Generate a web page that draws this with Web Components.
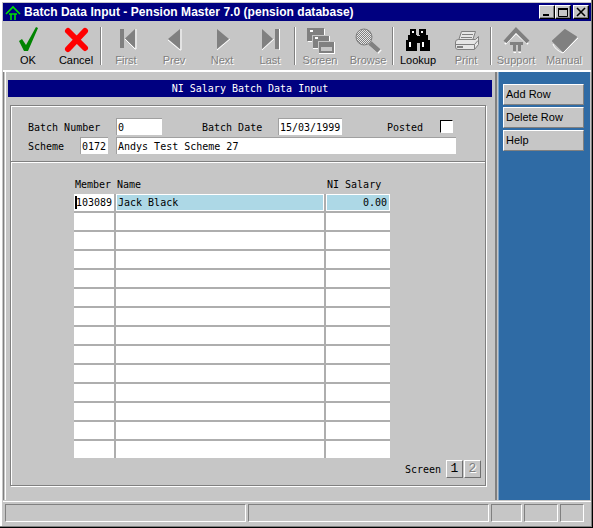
<!DOCTYPE html>
<html>
<head>
<meta charset="utf-8">
<title>Batch Data Input</title>
<style>
  html, body { margin: 0; padding: 0; background: #c6c6c6; }
</style>
</head>
<body>
<pm-window>
  <pm-titlebar slot="title">Batch Data Input - Pension Master 7.0 (pension database)</pm-titlebar>

  <pm-toolbar slot="toolbar">
    <pm-tool>
      <svg slot="icon" width="30" height="28"><polygon points="6,14 9,12 13,18 23,0 25,1 15,24 11,24" fill="#008400"/></svg>
      OK
    </pm-tool>
    <pm-tool>
      <svg slot="icon" width="30" height="28"><path d="M7 4 L24 21 M24 4 L7 22" stroke="#f00" stroke-width="6" stroke-linecap="round" fill="none"/></svg>
      Cancel
    </pm-tool>
    <pm-sep></pm-sep>
    <pm-tool disabled>
      <svg slot="icon" width="30" height="28"><rect x="9" y="2" width="4" height="19" fill="#808080"/><polygon points="14,11.5 24,2 24,21" fill="#808080"/><path d="M14 12 L24 22 H25 V2" stroke="#fff" fill="none"/></svg>
      First
    </pm-tool>
    <pm-tool disabled>
      <svg slot="icon" width="30" height="28"><polygon points="9,12 21,2 21,22" fill="#808080"/><path d="M9 13 L21 23 H22 V2" stroke="#fff" fill="none"/></svg>
      Prev
    </pm-tool>
    <pm-tool disabled>
      <svg slot="icon" width="30" height="28"><polygon points="10,2 22,12 10,22" fill="#808080"/><path d="M10 23 L23 12" stroke="#fff" fill="none"/></svg>
      Next
    </pm-tool>
    <pm-tool disabled>
      <svg slot="icon" width="30" height="28"><polygon points="7,2 18,12 7,22" fill="#808080"/><rect x="20" y="2" width="4" height="20" fill="#808080"/><path d="M7 23 L19 12 M24.5 2 V23" stroke="#fff" fill="none"/></svg>
      Last
    </pm-tool>
    <pm-sep></pm-sep>
    <pm-tool disabled>
      <svg slot="icon" width="30" height="28" shape-rendering="crispEdges">
        <rect x="2" y="1" width="17" height="13" fill="#808080"/><path d="M3 14.5 H19.5 V2" stroke="#fff" fill="none"/><rect x="5" y="3" width="3" height="2" fill="#fff"/>
        <rect x="7" y="8" width="17" height="13" fill="#808080" stroke="#c6c6c6"/><path d="M8 21.5 H24.5 V9" stroke="#fff" fill="none"/><rect x="10" y="10" width="3" height="2" fill="#fff"/>
        <rect x="13" y="14" width="16" height="12" fill="#808080" stroke="#c6c6c6"/><path d="M14 26.5 H29.5 V15" stroke="#fff" fill="none"/><rect x="16" y="20" width="11" height="4" fill="#c6c6c6"/>
      </svg>
      Screen
    </pm-tool>
    <pm-tool disabled>
      <svg slot="icon" width="30" height="28">
        <defs><pattern id="chk" width="2" height="2" patternUnits="userSpaceOnUse"><rect width="2" height="2" fill="#808080"/><rect width="1" height="1" fill="#e8e8e8"/><rect x="1" y="1" width="1" height="1" fill="#e8e8e8"/></pattern></defs>
        <path d="M18 17 L27 25" stroke="#fff" stroke-width="5"/>
        <path d="M17 16 L26 24" stroke="#808080" stroke-width="5"/>
        <circle cx="11" cy="10" r="8" fill="url(#chk)" stroke="#808080"/>
      </svg>
      Browse
    </pm-tool>
    <pm-sep></pm-sep>
    <pm-tool>
      <svg slot="icon" width="30" height="28" shape-rendering="crispEdges">
        <path d="M7 2 H13 V8 H14 V9 H17 V8 H16 V2 H23 V8 H25 V13 H27 V24 H17 V16 H14 V24 H3 V13 H5 V8 H7 Z" fill="#000"/>
        <path d="M6 15 H8 V20 H6 Z M19 15 H21 V20 H19 Z M9 4 H11 V6 H9 Z M18 4 H20 V6 H18 Z" fill="#fff"/>
      </svg>
      Lookup
    </pm-tool>
    <pm-tool disabled>
      <svg slot="icon" width="30" height="28">
        <polygon points="10.5,4.5 24.5,4.5 21.5,13.5 7.5,13.5" fill="#e6e6e6" stroke="#808080"/>
        <path d="M11 7.5 H22 M10 10.5 H21" stroke="#808080"/>
        <path d="M7.5 12.5 H24.5 L27.5 9.5 V17.5 L23.5 22.5 H7 Q4.5 22.5 4.5 20 V15 Q4.5 12.5 7.5 12.5 Z" fill="#e6e6e6" stroke="#808080"/>
        <path d="M5 17.5 H23.5 V22 M23.5 17.5 L27 13.5" stroke="#808080" fill="none"/>
        <rect x="6" y="19" width="6" height="2" fill="#808080"/>
      </svg>
      Print
    </pm-tool>
    <pm-sep></pm-sep>
    <pm-tool disabled>
      <svg slot="icon" width="30" height="28">
        <path d="M4 15 L15 4 L27 15" stroke="#fff" stroke-width="2" fill="none" transform="translate(0 2)"/>
        <path d="M4 15 L15 3 L27 15" stroke="#808080" stroke-width="4" fill="none"/>
        <path d="M9 15 H22 V18 H20 V24 H17 V18 H15 V24 H12 V18 H9 Z" fill="#808080"/>
        <path d="M12.5 25.5 H15 M17.5 25.5 H20" stroke="#fff" fill="none"/>
      </svg>
      Support
    </pm-tool>
    <pm-tool disabled>
      <svg slot="icon" width="30" height="28">
        <polygon points="4,14 16,3 27,10 14,24" fill="#808080" stroke="#808080" stroke-width="2" stroke-linejoin="round"/>
        <path d="M4 17 Q6 23 14 26 L29 11" stroke="#fff" fill="none"/>
      </svg>
      Manual
    </pm-tool>
  </pm-toolbar>

  <pm-heading slot="main">NI Salary Batch Data Input</pm-heading>
  <pm-group slot="main">
    <pm-form-row slot="form">
      <pm-label style="width:88px">Batch Number</pm-label>
      <pm-field style="width:46px">0</pm-field>
      <pm-label style="width:76px;margin-left:40px">Batch Date</pm-label>
      <pm-field style="width:64px">15/03/1999</pm-field>
      <pm-label style="width:53px;margin-left:45px">Posted</pm-label>
      <pm-check></pm-check>
    </pm-form-row>
    <pm-form-row slot="form">
      <pm-label style="width:52px">Scheme</pm-label>
      <pm-field style="width:28px">0172</pm-field>
      <pm-field style="width:340px;margin-left:8px">Andys Test Scheme 27</pm-field>
    </pm-form-row>

    <pm-table id="rows"></pm-table>

    <pm-pager slot="footer">
      <pm-page-btn>1</pm-page-btn>
      <pm-page-btn disabled>2</pm-page-btn>
    </pm-pager>
  </pm-group>

  <pm-side-btn slot="side">Add Row</pm-side-btn>
  <pm-side-btn slot="side">Delete Row</pm-side-btn>
  <pm-side-btn slot="side">Help</pm-side-btn>

  <pm-status slot="status" style="width:241px"></pm-status>
  <pm-status slot="status" style="width:241px"></pm-status>
  <pm-status slot="status" style="width:31px"></pm-status>
  <pm-status slot="status" style="width:34px"></pm-status>
  <pm-status slot="status" style="width:24px"></pm-status>
</pm-window>

<script>
const MONO = '"DejaVu Sans Mono", "Liberation Mono", monospace';
const SANS = '"Liberation Sans", sans-serif';

class PmWindow extends HTMLElement {
    constructor() {
        super();
        this.attachShadow({ mode: 'open' });
        this.shadowRoot.innerHTML = `
            <style>
                :host {
                    display: flex;
                    flex-direction: column;
                    box-sizing: border-box;
                    width: 593px;
                    height: 528px;
                    padding: 3px 2px 2px 3px;
                    background: #c6c6c6;
                    box-shadow: inset -1px -1px 0 #000, inset -2px -2px 0 #808080, inset 2px 2px 0 #fff, inset 1px 1px 0 #c6c6c6;
                    overflow: hidden;
                }
                .client {
                    display: flex;
                    height: 428px;
                    border-top: 2px solid #fff;
                    box-shadow: inset 1px 0 0 #808080;
                }
                .main {
                    box-sizing: border-box;
                    width: 492px;
                    margin-left: 2px;
                    padding: 8px 0 0 2px;
                    border-right: 2px solid #808080;
                    border-left: 1px solid #fff;
                }
                .side {
                    display: flex;
                    flex-direction: column;
                    gap: 2px;
                    box-sizing: border-box;
                    width: 92px;
                    margin-left: 1px;
                    padding: 12px 0 0 4px;
                    background: #2f6ba5;
                    border-left: 1px solid #7fa3c6;
                }
                .status {
                    display: flex;
                    gap: 2px;
                    margin-top: 1px;
                    padding: 2px 0 0 2px;
                    border-top: 1px solid #fff;
                }
            </style>
            <slot name="title"></slot>
            <slot name="toolbar"></slot>
            <div class="client">
                <div class="main"><slot name="main"></slot></div>
                <div class="side"><slot name="side"></slot></div>
            </div>
            <div class="status"><slot name="status"></slot></div>
        `;
    }
}

class PmTitlebar extends HTMLElement {
    constructor() {
        super();
        this.attachShadow({ mode: 'open' });
        this.shadowRoot.innerHTML = `
            <style>
                :host {
                    display: flex;
                    align-items: center;
                    height: 18px;
                    background: #000080;
                    color: #fff;
                    font: bold 12px "Liberation Sans", sans-serif;
                    letter-spacing: 0.04px;
                    white-space: nowrap;
                }
                .logo { margin: 0 3px 0 2px; flex: none; }
                .text { flex: 1; }
                .btns { display: flex; margin-right: 2px; }
                .btn {
                    box-sizing: border-box;
                    width: 16px;
                    height: 14px;
                    background: #c6c6c6;
                    border: 1px solid;
                    border-color: #fff #000 #000 #fff;
                    box-shadow: inset -1px -1px 0 #808080;
                }
                .btn svg { display: block; }
                .btn.close { margin-left: 2px; }
            </style>
            <svg class="logo" width="16" height="15" fill="none" stroke="#00e000" stroke-width="1.6">
                <path d="M1 9 L8 2 L15 9"/><path d="M4 9 H12 M6 9 V15 M10 9 V15"/>
            </svg>
            <span class="text"><slot></slot></span>
            <div class="btns">
                <div class="btn"><svg width="14" height="12"><rect x="3" y="8" width="6" height="2" fill="#000"/></svg></div>
                <div class="btn"><svg width="14" height="12"><path d="M2.5 2.5 H11.5 V10.5 H2.5 Z" fill="none" stroke="#000"/><rect x="2" y="2" width="10" height="2"/></svg></div>
                <div class="btn close"><svg width="14" height="12"><path d="M3 2 L11 10 M11 2 L3 10" stroke="#000" stroke-width="1.6"/></svg></div>
            </div>
        `;
    }
}

class PmToolbar extends HTMLElement {
    constructor() {
        super();
        this.attachShadow({ mode: 'open' });
        this.shadowRoot.innerHTML = `
            <style>
                :host {
                    display: flex;
                    box-sizing: border-box;
                    height: 48px;
                    margin-top: 1px;
                    padding-left: 1px;
                }
            </style>
            <slot></slot>
        `;
    }
}

class PmTool extends HTMLElement {
    constructor() {
        super();
        this.attachShadow({ mode: 'open' });
        this.shadowRoot.innerHTML = `
            <style>
                :host {
                    display: flex;
                    flex-direction: column;
                    align-items: center;
                    box-sizing: border-box;
                    width: 48px;
                    padding-top: 5px;
                    font: 11px ${SANS};
                    color: #000;
                    white-space: nowrap;
                }
                :host([disabled]) {
                    color: #808080;
                    text-shadow: 1px 1px 0 #fff;
                }
                ::slotted(svg) { display: block; overflow: visible; }
                .label { height: 14px; line-height: 14px; margin-top: -2px; }
            </style>
            <slot name="icon"></slot>
            <div class="label"><slot></slot></div>
        `;
    }
}

class PmSep extends HTMLElement {
    constructor() {
        super();
        this.attachShadow({ mode: 'open' });
        this.shadowRoot.innerHTML = `
            <style>
                :host {
                    display: block;
                    box-sizing: border-box;
                    width: 2px;
                    height: 38px;
                    margin-top: 5px;
                    border-left: 1px solid #808080;
                    border-right: 1px solid #fff;
                }
            </style>
        `;
    }
}

class PmHeading extends HTMLElement {
    constructor() {
        super();
        this.attachShadow({ mode: 'open' });
        this.shadowRoot.innerHTML = `
            <style>
                :host {
                    display: block;
                    width: 484px;
                    height: 17px;
                    background: #000080;
                    color: #fff;
                    font: 10px/17px ${MONO};
                    text-align: center;
                }
            </style>
            <slot></slot>
        `;
    }
}

class PmGroup extends HTMLElement {
    constructor() {
        super();
        this.attachShadow({ mode: 'open' });
        this.shadowRoot.innerHTML = `
            <style>
                :host {
                    display: block;
                    box-sizing: border-box;
                    width: 476px;
                    height: 381px;
                    margin: 8px 0 0 2px;
                    border: 1px solid #808080;
                    box-shadow: 1px 1px 0 #fff, inset 1px 1px 0 #fff;
                    font: 10px ${MONO};
                    color: #000;
                }
                .form {
                    display: flex;
                    flex-direction: column;
                    gap: 2px;
                    height: 56px;
                    box-sizing: border-box;
                    padding: 12px 0 0 17px;
                    border-bottom: 1px solid #808080;
                    box-shadow: 0 1px 0 #fff;
                }
                .body {
                    padding: 16px 0 0 63px;
                }
                .foot { display: flex; justify-content: flex-end; padding: 2px 4px 0 0; }
            </style>
            <div class="form"><slot name="form"></slot></div>
            <div class="body"><slot></slot></div>
            <div class="foot"><slot name="footer"></slot></div>
        `;
    }
}

class PmFormRow extends HTMLElement {
    constructor() {
        super();
        this.attachShadow({ mode: 'open' });
        this.shadowRoot.innerHTML = `
            <style>
                :host { display: flex; align-items: center; height: 17px; }
            </style>
            <slot></slot>
        `;
    }
}

class PmLabel extends HTMLElement {
    constructor() {
        super();
        this.attachShadow({ mode: 'open' });
        this.shadowRoot.innerHTML = `
            <style>
                :host { display: block; flex: none; padding-top: 2px; white-space: nowrap; }
            </style>
            <slot></slot>
        `;
    }
}

class PmField extends HTMLElement {
    constructor() {
        super();
        this.attachShadow({ mode: 'open' });
        this.shadowRoot.innerHTML = `
            <style>
                :host {
                    display: block;
                    flex: none;
                    box-sizing: border-box;
                    height: 17px;
                    padding: 1px 0 0 1px;
                    line-height: 15px;
                    background: #fff;
                    border-top: 1px solid #a0a0a0;
                    border-left: 1px solid #a0a0a0;
                    white-space: nowrap;
                }
            </style>
            <slot></slot>
        `;
    }
}

class PmCheck extends HTMLElement {
    constructor() {
        super();
        this.attachShadow({ mode: 'open' });
        this.shadowRoot.innerHTML = `
            <style>
                :host {
                    display: block;
                    flex: none;
                    box-sizing: border-box;
                    width: 13px;
                    height: 13px;
                    background: #fff;
                    border: 1px solid #000;
                    border-right-color: #fff;
                    border-bottom-color: #fff;
                }
            </style>
        `;
    }
}

// grid of rows: the grey between the cells is the background of the grid
class PmTable extends HTMLElement {
    constructor() {
        super();
        this.attachShadow({ mode: 'open' });
        this.shadowRoot.innerHTML = `
            <style>
                :host { display: block; width: 316px; }
                .head {
                    display: grid;
                    grid-template-columns: 42px 210px 64px;
                    height: 16px;
                    line-height: 13px;
                }
                .head span { padding-left: 1px; }
                .grid {
                    display: grid;
                    grid-template-columns: 40px 208px 64px;
                    grid-auto-rows: 17px;
                    gap: 2px;
                    background: #aeaeae;
                }
            </style>
            <div class="head"><span>Member</span><span>Name</span><span>NI Salary</span></div>
            <div class="grid"><slot></slot></div>
        `;
    }

    connectedCallback() {
        this.appendChild(this._cell('103089', 'caret'));
        this.appendChild(this._cell('Jack Black', 'current'));
        this.appendChild(this._cell('0.00', 'current number'));
        for (let i = 0; i < 13 * 3; i++) {
            this.appendChild(this._cell(''));
        }
    }

    _cell(text, flags) {
        const cell = document.createElement('pm-cell');
        cell.textContent = text;
        (flags || '').split(' ').filter(Boolean).forEach(f => cell.setAttribute(f, ''));
        return cell;
    }
}

class PmCell extends HTMLElement {
    constructor() {
        super();
        this.attachShadow({ mode: 'open' });
        this.shadowRoot.innerHTML = `
            <style>
                :host {
                    display: block;
                    position: relative;
                    box-sizing: border-box;
                    padding: 1px 2px 0;
                    line-height: 16px;
                    background: #fff;
                    white-space: nowrap;
                }
                :host([current]) {
                    padding: 1px 1px 0;
                    line-height: 14px;
                    background: #add8e6;
                    border: 1px solid #fff;
                }
                :host([number]) { text-align: right; padding-right: 2px; }
                :host([caret])::before {
                    content: "";
                    position: absolute;
                    left: 1px;
                    top: 2px;
                    width: 2px;
                    height: 13px;
                    background: #000;
                }
            </style>
            <slot></slot>
        `;
    }
}

class PmPager extends HTMLElement {
    constructor() {
        super();
        this.attachShadow({ mode: 'open' });
        this.shadowRoot.innerHTML = `
            <style>
                :host { display: flex; align-items: center; gap: 1px; }
                span { margin-right: 4px; }
            </style>
            <span>Screen</span>
            <slot></slot>
        `;
    }
}

class PmPageBtn extends HTMLElement {
    constructor() {
        super();
        this.attachShadow({ mode: 'open' });
        this.shadowRoot.innerHTML = `
            <style>
                :host {
                    display: block;
                    box-sizing: border-box;
                    width: 17px;
                    height: 18px;
                    border: 1px solid;
                    border-color: #fff #6f6f6f #6f6f6f #fff;
                    font: 13px/16px "Liberation Mono", monospace;
                    text-align: center;
                }
                :host([disabled]) {
                    color: #808080;
                    text-shadow: 1px 1px 0 #fff;
                }
            </style>
            <slot></slot>
        `;
    }
}

class PmSideBtn extends HTMLElement {
    constructor() {
        super();
        this.attachShadow({ mode: 'open' });
        this.shadowRoot.innerHTML = `
            <style>
                :host {
                    display: block;
                    box-sizing: border-box;
                    width: 81px;
                    height: 21px;
                    padding-left: 2px;
                    background: #c6c6c6;
                    border: 1px solid;
                    border-color: #fff #808080 #808080 #fff;
                    font: 11px/19px ${SANS};
                    color: #000;
                    white-space: nowrap;
                }
            </style>
            <slot></slot>
        `;
    }
}

class PmStatus extends HTMLElement {
    constructor() {
        super();
        this.attachShadow({ mode: 'open' });
        this.shadowRoot.innerHTML = `
            <style>
                :host {
                    display: block;
                    box-sizing: border-box;
                    height: 18px;
                    border: 1px solid;
                    border-color: #808080 #fff #fff #808080;
                }
            </style>
        `;
    }
}

customElements.define('pm-window', PmWindow);
customElements.define('pm-titlebar', PmTitlebar);
customElements.define('pm-toolbar', PmToolbar);
customElements.define('pm-tool', PmTool);
customElements.define('pm-sep', PmSep);
customElements.define('pm-heading', PmHeading);
customElements.define('pm-group', PmGroup);
customElements.define('pm-form-row', PmFormRow);
customElements.define('pm-label', PmLabel);
customElements.define('pm-field', PmField);
customElements.define('pm-check', PmCheck);
customElements.define('pm-table', PmTable);
customElements.define('pm-cell', PmCell);
customElements.define('pm-pager', PmPager);
customElements.define('pm-page-btn', PmPageBtn);
customElements.define('pm-side-btn', PmSideBtn);
customElements.define('pm-status', PmStatus);
</script>
</body>
</html>
